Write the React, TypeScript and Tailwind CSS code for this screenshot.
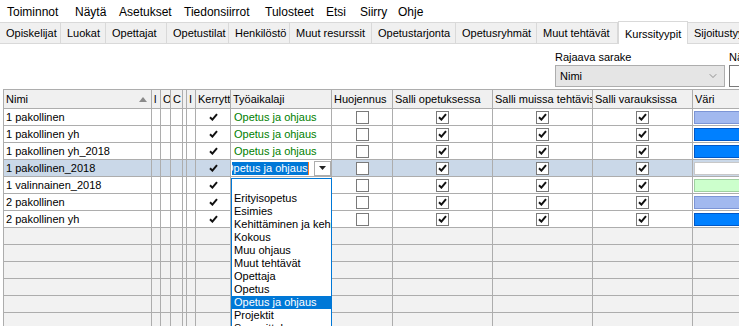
import { ChevronDown } from "lucide-react";

const menuItems = [
  { label: "Toiminnot", w: "w-[68px]" },
  { label: "Näytä", w: "w-[44px]" },
  { label: "Asetukset", w: "w-[65px]" },
  { label: "Tiedonsiirrot", w: "w-[81px]" },
  { label: "Tulosteet", w: "w-[61px]" },
  { label: "Etsi", w: "w-[34px]" },
  { label: "Siirry", w: "w-[38px]" },
  { label: "Ohje", w: "w-[40px]" },
];

const tabs = [
  { label: "Opiskelijat", w: "w-[61px]" },
  { label: "Luokat", w: "w-[45px]" },
  { label: "Opettajat", w: "w-[61px]" },
  { label: "Opetustilat", w: "w-[62px]" },
  { label: "Henkilöstö", w: "w-[61px]" },
  { label: "Muut resurssit", w: "w-[82px]" },
  { label: "Opetustarjonta", w: "w-[84px]" },
  { label: "Opetusryhmät", w: "w-[81px]" },
  { label: "Muut tehtävät", w: "w-[81px]" },
  { label: "Kurssityypit", w: "w-[70px]", active: true },
  { label: "Sijoitustyypit", w: "w-[90px]" },
];

// column widths include the right grid line
const cols = [
  { w: "w-[148px]", h: "Nimi" },
  { w: "w-[9px]", h: "l" },
  { w: "w-[10px]", h: "O" },
  { w: "w-[12px]", h: "C" },
  { w: "w-[4px]", h: "" },
  { w: "w-[9px]", h: "I" },
  { w: "w-[35px]", h: "Kerryttää" },
  { w: "w-[101px]", h: "Työaikalaji" },
  { w: "w-[61px]", h: "Huojennus" },
  { w: "w-[100px]", h: "Salli opetuksessa" },
  { w: "w-[100px]", h: "Salli muissa tehtävissä" },
  { w: "w-[100px]", h: "Salli varauksissa" },
  { w: "w-[120px]", h: "Väri" },
];

const swatches = {
  light: "bg-[#a2b9ef] border-[#7c95d6]",
  blue: "bg-[#0080ff] border-[#0058c8]",
  white: "bg-white border-[#c8c8c8]",
  green: "bg-[#ccffcc] border-[#a0d0a0]",
};

const rows: { name: string; color: keyof typeof swatches; selected?: boolean }[] = [
  { name: "1 pakollinen", color: "light" },
  { name: "1 pakollinen yh", color: "blue" },
  { name: "1 pakollinen yh_2018", color: "blue" },
  { name: "1 pakollinen_2018", color: "white", selected: true },
  { name: "1 valinnainen_2018", color: "green" },
  { name: "2 pakollinen", color: "light" },
  { name: "2 pakollinen yh", color: "blue" },
];

const listItems = [
  "",
  "Erityisopetus",
  "Esimies",
  "Kehittäminen ja kehitystyö",
  "Kokous",
  "Muu ohjaus",
  "Muut tehtävät",
  "Opettaja",
  "Opetus",
  "Opetus ja ohjaus",
  "Projektit",
  "Suunnittelu",
];

const Tick = () => (
  <svg width="9" height="8" viewBox="0 0 9 8">
    <path d="M1 4.2 L3.4 6.6 L8 1.2" fill="none" stroke="#111" strokeWidth="2" />
  </svg>
);

const CheckBox = ({ checked }: { checked: boolean }) => (
  <div className="w-[13px] h-[13px] border border-[#7a7a7a] bg-white flex items-center justify-center">
    {checked && <Tick />}
  </div>
);

const cell = "h-full shrink-0 border-r border-[#adadad] overflow-hidden whitespace-nowrap flex items-center";

export default function App() {
  return (
    <div className="w-[739px] h-[326px] overflow-hidden bg-white text-black font-['Liberation_Sans',Arial,sans-serif] relative">
      {/* Menu */}
      <div className="flex h-[22px] items-center pt-[2px] pl-[7px] text-[12px]">
        {menuItems.map((m) => (
          <div key={m.label} className={`${m.w} shrink-0`}>
            {m.label}
          </div>
        ))}
      </div>

      {/* Tabs */}
      <div className="flex h-[22px] items-end border-b border-[#d9d9d9] text-[11px]">
        {tabs.map((t) =>
          t.active ? (
            <div
              key={t.label}
              className={`${t.w} shrink-0 h-[23px] -mb-px bg-white border-x border-t border-[#d9d9d9] pl-[6px] pt-[4px]`}
            >
              {t.label}
            </div>
          ) : (
            <div
              key={t.label}
              className={`${t.w} shrink-0 h-[21px] bg-[#f0f0f0] border-r border-t border-[#d9d9d9] pl-[6px] flex items-center whitespace-nowrap overflow-hidden`}
            >
              {t.label}
            </div>
          )
        )}
      </div>

      {/* Filter */}
      <div className="flex h-[45px] pl-[555px] gap-[4px] text-[11px]">
        <div className="w-[170px] shrink-0 pt-[6px]">
          <div className="h-[14px] leading-[14px]">Rajaava sarake</div>
          <div className="mt-[1px] h-[22px] border border-[#adadad] bg-[#e5e5e5] flex items-center justify-between pl-[4px] pr-[5px]">
            <span>Nimi</span>
            <ChevronDown size={12} strokeWidth={1.2} className="text-[#555]" />
          </div>
        </div>
        <div className="w-[80px] shrink-0 pt-[6px]">
          <div className="h-[14px] leading-[14px]">Näytä</div>
          <div className="mt-[1px] h-[22px] border border-[#7a7a7a] bg-white" />
        </div>
      </div>

      {/* Grid */}
      <div className="ml-[3px] border-l border-t border-[#adadad] relative text-[11px]">
        <div className="flex h-[19px] border-b border-[#adadad] bg-[#f0f0f0]">
          {cols.map((c, i) => (
            <div key={i} className={`${c.w} ${cell} pl-[2px] ${i === 0 ? "justify-between pr-[4px]" : ""}`}>
              <span>{c.h}</span>
              {i === 0 && (
                <svg width="8" height="5" viewBox="0 0 8 5">
                  <path d="M0 5 L4 0 L8 5 Z" fill="#8a8a8a" />
                </svg>
              )}
            </div>
          ))}
        </div>

        {rows.map((r) => (
          <div
            key={r.name}
            className={`flex h-[17px] border-b border-[#adadad] ${r.selected ? "bg-[#cad8e8]" : "bg-white"}`}
          >
            <div className={`${cols[0].w} ${cell} pl-[2px]`}>{r.name}</div>
            <div className={`${cols[1].w} ${cell}`} />
            <div className={`${cols[2].w} ${cell}`} />
            <div className={`${cols[3].w} ${cell}`} />
            <div className={`${cols[4].w} ${cell}`} />
            <div className={`${cols[5].w} ${cell}`} />
            <div className={`${cols[6].w} ${cell} justify-center`}>
              <Tick />
            </div>
            {r.selected ? (
              <div className={`${cols[7].w} ${cell} bg-white pl-[1px]`}>
                <div className="w-[80px] h-[13px] overflow-hidden flex items-center">
                  <span className="-ml-[7px] bg-[#0078d7] text-white leading-[13px]">Opetus ja ohjaus</span>
                  <span className="w-px h-[13px] bg-[#ff7a1a] shrink-0" />
                </div>
                <div className="ml-[2px] w-[17px] h-[15px] border border-[#adadad] bg-white flex items-center justify-center">
                  <svg width="7" height="4" viewBox="0 0 7 4">
                    <path d="M0 0 L7 0 L3.5 4 Z" fill="#222" />
                  </svg>
                </div>
              </div>
            ) : (
              <div className={`${cols[7].w} ${cell} pl-[3px] text-[#008000]`}>Opetus ja ohjaus</div>
            )}
            <div className={`${cols[8].w} ${cell} justify-center`}>
              <CheckBox checked={false} />
            </div>
            <div className={`${cols[9].w} ${cell} justify-center`}>
              <CheckBox checked />
            </div>
            <div className={`${cols[10].w} ${cell} justify-center`}>
              <CheckBox checked />
            </div>
            <div className={`${cols[11].w} ${cell} justify-center`}>
              <CheckBox checked />
            </div>
            <div className={`${cols[12].w} ${cell} pl-[1px]`}>
              <div className={`w-[100px] h-[13px] border ${swatches[r.color]}`} />
            </div>
          </div>
        ))}

        {[0, 1, 2, 3, 4, 5, 6].map((n) => (
          <div key={n} className="flex h-[17px] border-b border-[#adadad] bg-[#f2f2f2]">
            {cols.map((c, i) => (
              <div key={i} className={`${c.w} ${cell}`} />
            ))}
          </div>
        ))}

        {/* Open dropdown list */}
        <div className="absolute left-[227px] top-[88px] w-[101px] h-[170px] border border-[#0078d7] bg-white z-10 overflow-hidden">
          {listItems.map((item, i) => (
            <div
              key={i}
              className={`h-[13px] leading-[13px] pl-[2px] whitespace-nowrap ${
                item === "Opetus ja ohjaus" ? "bg-[#0078d7] text-white" : ""
              }`}
            >
              {item}
            </div>
          ))}
        </div>
      </div>
    </div>
  );
}
